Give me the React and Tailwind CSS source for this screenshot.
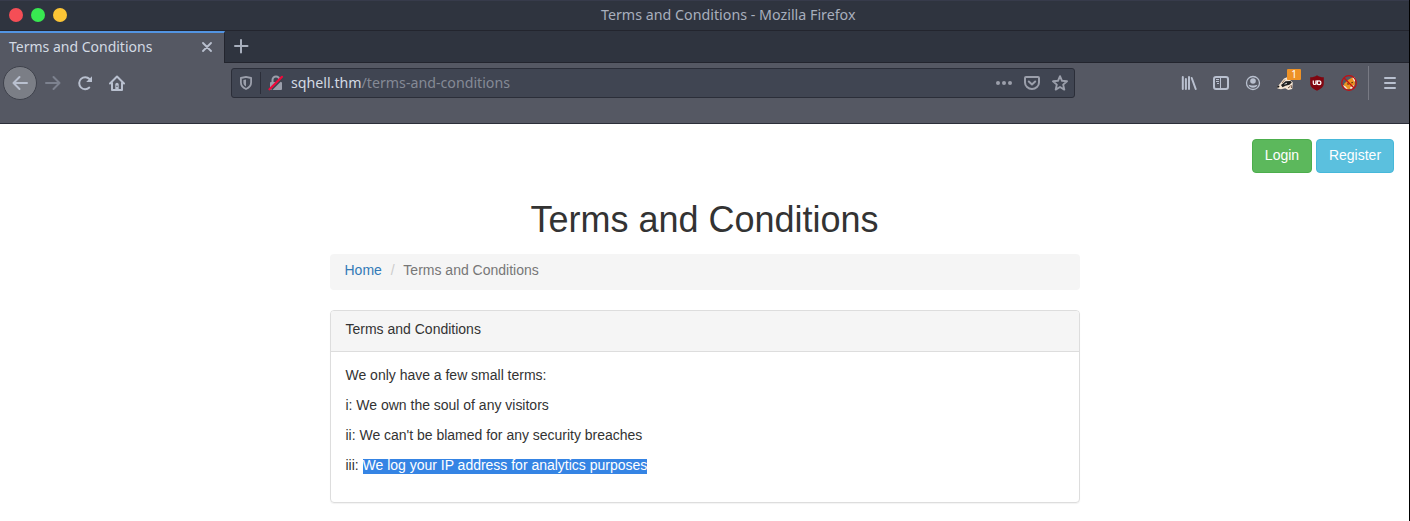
const icon = "fill-none stroke-[#b9c0cf] shrink-0";

function BackIcon() {
  return (
    <svg width="16" height="16" viewBox="0 0 16 16" className={icon} strokeWidth="2" strokeLinecap="round" strokeLinejoin="round">
      <path d="M15 8H1.5M7.500 2L1.500 8l6 6" />
    </svg>
  );
}

function ForwardIcon() {
  return (
    <svg width="16" height="16" viewBox="0 0 16 16" className="shrink-0 fill-none stroke-[#7d828f]" strokeWidth="2" strokeLinecap="round" strokeLinejoin="round">
      <path d="M1 8h13.500M8.500 2l6 6-6 6" />
    </svg>
  );
}

function ReloadIcon() {
  return (
    <svg width="16" height="16" viewBox="0 0 16 16" className={icon} strokeWidth="2" strokeLinecap="round">
      <path d="M12.300 12.600A6 6 0 1 1 12.500 4" />
      <path d="M15 1.200V7H9.200z" className="fill-[#b9c0cf]" stroke="none" />
    </svg>
  );
}

function HomeIcon() {
  return (
    <svg width="16" height="16" viewBox="0 0 16 16" className={icon} strokeWidth="2" strokeLinecap="round" strokeLinejoin="round">
      <path d="M1 8.500L8 1.500l7 7M3 8v7h10V8" />
      <path d="M6.300 9.500a1.700 1.700 0 0 1 3.400 0V14H6.300z" className="fill-[#b9c0cf]" stroke="none" />
      <circle cx="8" cy="11.300" r=".8" className="fill-[#555863]" stroke="none" />
    </svg>
  );
}

function ShieldIcon() {
  return (
    <svg width="14" height="16" viewBox="0 0 14 16" className="shrink-0 fill-none stroke-[#9b9fab]" strokeWidth="1.800" strokeLinejoin="round">
      <path d="M7 1.900L12.100 3v4.500c0 3-2 5.200-5.100 6.500-3.100-1.300-5.100-3.500-5.100-6.500V3z" />
      <path d="M7 4.400v7.200C5.200 10.500 4.400 9.300 4.400 7.500V4.900z" className="fill-[#9b9fab]" stroke="none" />
    </svg>
  );
}

function InsecureIcon() {
  return (
    <svg width="16" height="16" viewBox="0 0 16 16" className="shrink-0">
      <path d="M4.500 8V5a3.500 3.500 0 0 1 7 0v3" className="fill-none stroke-[#9b9fab]" strokeWidth="2" />
      <rect x="2" y="7" width="12" height="8" rx="1" className="fill-[#9b9fab]" />
      <path d="M3.500 14.500L15 3" className="stroke-[#404550]" strokeWidth="2" />
      <path d="M1.500 14.300L14 1.800" className="stroke-[#f00a3c]" strokeWidth="2.200" strokeLinecap="round" />
    </svg>
  );
}

function DotsIcon() {
  return (
    <svg width="16" height="16" viewBox="0 0 16 16" className="shrink-0 fill-[#9b9fab]">
      <circle cx="2" cy="8" r="2" /><circle cx="8" cy="8" r="2" /><circle cx="14" cy="8" r="2" />
    </svg>
  );
}

function PocketIcon() {
  return (
    <svg width="16" height="16" viewBox="0 0 16 16" className="shrink-0 fill-none stroke-[#9b9fab]" strokeWidth="2" strokeLinecap="round" strokeLinejoin="round">
      <path d="M2 2h12q1 0 1 1v4.500a7 6.500 0 0 1-14 0V3q0-1 1-1z" />
      <path d="M4.800 6.500L8 9.500l3.200-3" />
    </svg>
  );
}

function StarIcon() {
  return (
    <svg width="16" height="16" viewBox="0 0 16 16" className="shrink-0 fill-none stroke-[#9b9fab]" strokeWidth="1.900" strokeLinejoin="round">
      <path d="M8 1.200l2 4.600 5 .5-3.800 3.300 1.100 5L8 12l-4.300 2.600 1.100-5L1 6.300l5-.5z" />
    </svg>
  );
}

function LibraryIcon() {
  return (
    <svg width="16" height="16" viewBox="0 0 16 16" className={icon} strokeWidth="2" strokeLinecap="round">
      <path d="M1.800 2v12M4.900 4v10M8 2v12M10.700 3L14.700 14" />
    </svg>
  );
}

function SidebarIcon() {
  return (
    <svg width="16" height="16" viewBox="0 0 16 16" className={icon} strokeWidth="2">
      <rect x="1" y="2" width="14" height="12" rx="2" />
      <path d="M7.500 2v12" strokeWidth="1" />
      <path d="M3 4.500h3M3 6.500h3M4 8.500h2" strokeWidth="1" />
    </svg>
  );
}

function AccountIcon() {
  return (
    <svg width="16" height="16" viewBox="0 0 16 16" className={icon} strokeWidth="1.300">
      <circle cx="8" cy="8" r="6.500" />
      <circle cx="8" cy="6" r="2.800" className="fill-[#b9c0cf]" stroke="none" />
      <path d="M3.500 9.800c2 .9 7 .9 9 0-.5 2-2.300 3-4.500 3s-4-1-4.500-3z" className="fill-[#b9c0cf]" stroke="none" />
    </svg>
  );
}

function BadgerIcon() {
  return (
    <svg width="16" height="16" viewBox="0 0 16 16" className="shrink-0">
      <path d="M.2 12L3.500 8 7 3.500l3-1.300 5.800 5.300-.6 6.500-4 1-3-1.700-4.200.9-3.500-.8z" className="fill-[#f4e4d2]" />
      <path d="M4 10l4.500-3.700 5-.2 1.300 1.400-2.300 2.300-4 .9-3 1.600z" className="fill-[#202020]" />
      <path d="M5 8l3-3.500" className="stroke-[#8b6b55]" strokeWidth=".9" />
      <path d="M11 13l2-1.500M14 10l.5 3" className="stroke-[#6b4e40]" strokeWidth="1" />
      <path d="M.2 11.300l1.800-.8.500 1.600-2 .9z" className="fill-[#161616]" />
      <path d="M7.500 9.200l2.500-1" className="stroke-white" strokeWidth=".8" />
    </svg>
  );
}

function BlockerIcon() {
  return (
    <svg width="16" height="16" viewBox="0 0 16 16" className="shrink-0">
      <path d="M8 .3c2 1.400 4 2 6.800 2v5.700c0 4-2.800 6-6.800 7.700-4-1.700-6.800-3.700-6.800-7.700V2.300c2.800 0 4.800-.6 6.800-2z" className="fill-[#800610]" />
      <path d="M4.300 5.500v2.700a1.300 1.300 0 0 0 2.600 0V5.500" className="fill-none stroke-white" strokeWidth="1.200" />
      <circle cx="10" cy="7.700" r="1.900" className="fill-none stroke-white" strokeWidth="1.200" />
      <path d="M8.100 5v5" className="stroke-white" strokeWidth="1" />
    </svg>
  );
}

function FoxIcon() {
  return (
    <svg width="16" height="16" viewBox="0 0 16 16" className="shrink-0">
      <path d="M7 5l5-3 2 2-.2 6-3 3.500-5 1L2.500 11l1-2.500z" className="fill-[#ec9322]" />
      <path d="M11.500 3l2-.7 1.300 3-1.600 1.500zM1.700 10l3 1.500 2 2.500-2.500-.5zM9 12.500l4-2.500-1 3-2.500 1z" className="fill-[#f5e6e0]" />
      <path d="M6.500 8.500l1 1M10.500 8l1.200-.7" className="stroke-[#4a2612]" strokeWidth="1.200" />
      <circle cx="8" cy="8" r="7.300" className="fill-none stroke-[#c40d12]" strokeWidth="1.200" />
      <path d="M3 3l10 10" className="stroke-[#c40d12]" strokeWidth="1.200" />
    </svg>
  );
}

function TitleBar() {
  return (
    <header className="flex h-[30px] shrink-0 items-center border-t border-[#373b4b] bg-[#2f343f] pb-[2px]">
      <div className="flex w-[601px] gap-2 pl-[9px]">
        <span className="size-3.5 rounded-full bg-[#f54e56]" />
        <span className="size-3.5 rounded-full bg-[#38e851]" />
        <span className="size-3.5 rounded-full bg-[#fcc536]" />
      </div>
      <span className="text-[14.28px] leading-5 whitespace-nowrap text-[#a8afbd]">Terms and Conditions - Mozilla Firefox</span>
    </header>
  );
}

function TabBar() {
  return (
    <div className="flex h-[33px] shrink-0 border-t border-[#23252e] bg-[#2f343f]">
      <div className="flex w-[225px] items-center justify-between border-t-2 border-r border-t-[#5294e2] border-r-[#23252e] bg-[#555863] pr-3 pb-[2px] pl-[9px]">
        <span className="text-sm leading-5 whitespace-nowrap text-[#d3dae3]">Terms and Conditions</span>
        <svg width="10" height="10" viewBox="0 0 10 10" className={icon} strokeWidth="1.800" strokeLinecap="round"><path d="M1 1l8 8M9 1L1 9" /></svg>
      </div>
      <div className="flex grow items-center border-b border-[#23252e] pb-[2px] pl-2">
        <svg width="16" height="16" viewBox="0 0 16 16" className="fill-none stroke-[#a8afbd]" strokeWidth="2" strokeLinecap="round"><path d="M8 2v12.500M2 8h12.500" /></svg>
      </div>
    </div>
  );
}

function Toolbar() {
  return (
    <div className="flex h-[61px] shrink-0 items-start border-b border-[#2b2e39] bg-[#555863] pt-[3px]">
      <div className="flex h-[34px] w-[231px] items-center pl-[3px]">
        <span className="flex size-[34px] items-center justify-center rounded-full border border-[#3f424c] bg-[#7b7e86]"><BackIcon /></span>
        <span className="ml-2 flex items-center gap-4"><ForwardIcon /><ReloadIcon /><HomeIcon /></span>
      </div>
      <div className="mt-0.5 flex h-[30px] w-[844px] items-center rounded-[3px] border border-[#2b2e39] bg-[#404552] pr-1.5 pl-[7px]">
        <ShieldIcon />
        <span className="mx-[7px] h-[22px] w-px bg-[#2b2e39]" />
        <InsecureIcon />
        <span className="ml-[7px] grow text-[14.2px] leading-5 text-[#858a96]"><span className="text-[#d3dae3]">sqhell.thm</span>/terms-and-conditions</span>
        <span className="flex gap-3"><DotsIcon /><PocketIcon /><StarIcon /></span>
      </div>
      <div className="flex h-[34px] grow items-center pl-[106px]">
        <span className="flex gap-4">
          <LibraryIcon /><SidebarIcon /><AccountIcon />
          <span className="relative">
            <BadgerIcon />
            <span className="absolute -top-1.5 left-2.5 h-[11px] w-3.5 rounded-[1px] bg-[#ee9226] text-center text-[10px] leading-[11px] text-white">1</span>
          </span>
          <BlockerIcon /><FoxIcon />
        </span>
        <span className="ml-[11px] h-[34px] w-px bg-[#787a84]" />
        <svg width="14" height="16" viewBox="0 0 14 16" className="ml-3.5 fill-none stroke-[#b9c0cf]" strokeWidth="2" strokeLinecap="round"><path d="M2 3h10M2 8h10M2 13h10" /></svg>
      </div>
    </div>
  );
}

function Page() {
  return (
    <main className="flex grow flex-col bg-white font-['Liberation_Sans',Arial,sans-serif] text-sm leading-5 text-[#333]">
      <div className="flex justify-end gap-1 pt-[15px] pr-[15px]">
        <button className="h-[34px] w-[60px] rounded border border-[#4cae4c] bg-[#5cb85c] pb-0.5 text-white">Login</button>
        <button className="h-[34px] w-[78px] rounded border border-[#46b8da] bg-[#5bc0de] pb-0.5 text-white">Register</button>
      </div>
      <div className="ml-[330px] w-[750px]">
        <h1 className="mt-[27px] pr-px text-center text-[36px] leading-[40px] font-normal">Terms and Conditions</h1>
        <nav className="mt-3.5 flex h-9 rounded bg-[#f5f5f5] px-[14.5px] pt-1.5">
          <a className="text-[#337ab7]">Home</a>
          <span className="w-[21.5px] pl-[9px] text-[#ccc]">/</span>
          <span className="text-[#777]">Terms and Conditions</span>
        </nav>
        <section className="mt-5 h-[193px] rounded border border-[#ddd] shadow-[0_1px_1px_rgba(0,0,0,0.05)]">
          <h2 className="h-[41px] rounded-t-[3px] border-b border-[#ddd] bg-[#f5f5f5] px-[14.5px] pt-2">Terms and Conditions</h2>
          <div className="flex flex-col gap-2.5 px-[14.5px] pt-[13px] tracking-[-0.01px]">
            <p>We only have a few small terms:</p>
            <p>i: We own the soul of any visitors</p>
            <p>ii: We can't be blamed for any security breaches</p>
            <p className="h-5">iii: <span className="inline-block h-[15px] bg-[#3584e4] leading-[13px] text-white">We log your IP address for analytics purposes</span></p>
          </div>
        </section>
      </div>
    </main>
  );
}

export default function App() {
  return (
    <div className="flex h-[521px] w-[1410px] flex-col overflow-hidden border-r border-black font-['Noto_Sans',sans-serif]">
      <TitleBar />
      <TabBar />
      <Toolbar />
      <Page />
    </div>
  );
}
